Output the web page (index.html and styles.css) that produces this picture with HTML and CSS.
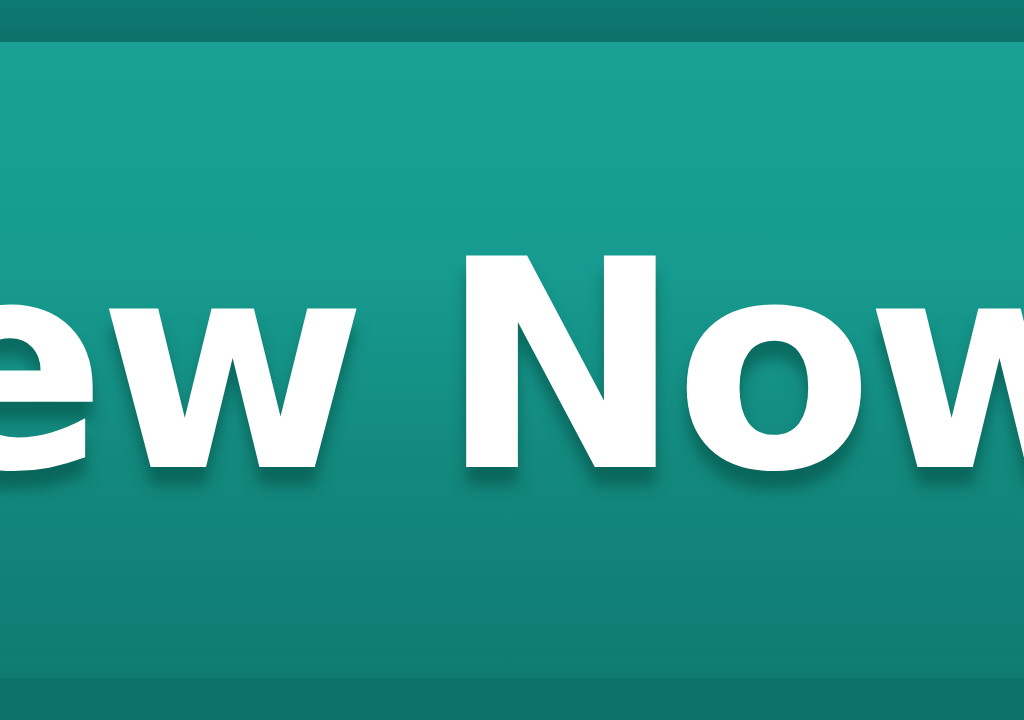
FILE: index.html
```html
<!DOCTYPE html>
<html>
<head>
<meta charset="utf-8">
<link rel="stylesheet" href="styles.css">
</head>
<body>
<div class="button">
  <div class="top-band"></div>
  <div class="face">
    <span class="label">ew Now</span>
  </div>
  <div class="bottom-band"></div>
</div>
</body>
</html>
```
FILE: styles.css
```css
html, body {
  margin: 0;
  padding: 0;
  width: 1024px;
  height: 720px;
  overflow: hidden;
  background: #0d756c;
}
.button {
  display: flex;
  flex-direction: column;
  width: 1024px;
  height: 720px;
  overflow: hidden;
}
.top-band {
  height: 42px;
  background: linear-gradient(#0e7a71, #0c726a);
  flex: none;
}
.bottom-band {
  height: 42px;
  background: #0c736b;
  flex: none;
}
.face {
  flex: 1;
  background: linear-gradient(#1aa196 0%, #179b90 35%, #13897e 65%, #107b71 100%);
  padding-top: 180px;
  white-space: nowrap;
  overflow: hidden;
}
.label {
  display: block;
  margin-left: -90px;
  font-family: "DejaVu Sans", sans-serif;
  font-weight: bold;
  font-size: 290px;
  line-height: 290px;
  color: #ffffff;
  letter-spacing: -8px;
  word-spacing: -12px;
  text-shadow: 0 18px 14px rgba(0, 70, 60, 0.5);
}
```
